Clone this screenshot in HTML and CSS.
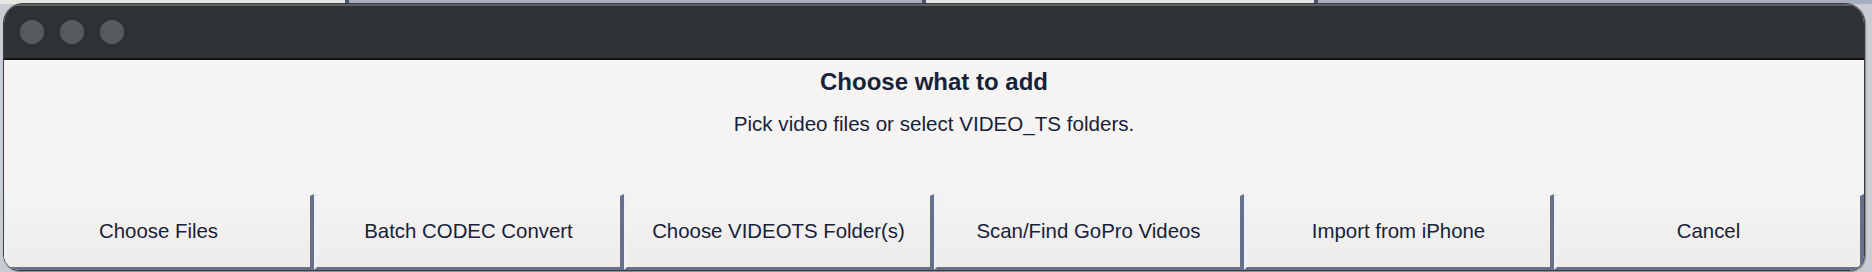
FILE: index.html
```html
<!DOCTYPE html>
<html>
<head>
<meta charset="utf-8">
<link rel="stylesheet" href="styles.css">
</head>
<body>
<div class="window">
  <div class="titlebar">
    <span class="light"></span>
    <span class="light"></span>
    <span class="light"></span>
  </div>
  <div class="content">
    <div class="heading">Choose what to add</div>
    <div class="sub">Pick video files or select VIDEO_TS folders.</div>
  </div>
  <div class="buttons">
    <div class="btn">Choose Files</div>
    <div class="btn">Batch CODEC Convert</div>
    <div class="btn">Choose VIDEOTS Folder(s)</div>
    <div class="btn">Scan/Find GoPro Videos</div>
    <div class="btn">Import from iPhone</div>
    <div class="btn">Cancel</div>
  </div>
</div>
</body>
</html>
```
FILE: styles.css
```css
html, body {
  margin: 0;
  padding: 0;
}
body {
  width: 1872px;
  height: 272px;
  overflow: hidden;
  box-sizing: border-box;
  padding: 3px 0 0 3px;
  background:
    linear-gradient(to right,
      #e6e6e4 0, #e6e6e4 345px, #4b5568 345px, #4b5568 349px,
      #a7afbf 349px, #a7afbf 922px, #4b5568 922px, #4b5568 926px,
      #e6e6e4 926px, #e6e6e4 1314px, #4b5568 1314px, #4b5568 1318px,
      #a7afbf 1318px, #a7afbf 100%) top / 100% 4px no-repeat,
    #c9ccd3;
  font-family: "Liberation Sans", Arial, sans-serif;
}
.window {
  width: 1862px;
  height: 268px;
  box-sizing: border-box;
  border: 1px solid #3b3d40;
  border-radius: 20px 20px 16px 16px;
  overflow: hidden;
  background: #f5f4f2;
  display: flex;
  flex-direction: column;
  box-shadow: 1px 1px 1px rgba(0, 0, 0, 0.35);
}
.titlebar {
  height: 56px;
  flex: none;
  box-sizing: border-box;
  background: #2f3235;
  border-top: 2px solid #5f6265;
  border-bottom: 2px solid #111214;
  display: flex;
  align-items: center;
  gap: 16px;
  padding-left: 16px;
}
.light {
  width: 24px;
  height: 24px;
  border-radius: 50%;
  background: #575c5f;
}
.content {
  flex: 1;
  display: flex;
  flex-direction: column;
  align-items: center;
  color: #17223a;
}
.heading {
  font-weight: bold;
  font-size: 24px;
  margin-top: 8px;
  line-height: 28px;
}
.sub {
  font-size: 20.6px;
  margin-top: 16px;
  line-height: 24px;
}
.buttons {
  flex: none;
  height: 76px;
  display: flex;
}
.btn {
  flex: 1;
  box-sizing: border-box;
  border-top: 2px solid #eef1f8;
  border-left: 3px solid #eef1f8;
  border-right: 4px solid #66708a;
  border-bottom: 3px solid #66708a;
  background: linear-gradient(#f5f4f2, #edecea);
  display: flex;
  align-items: center;
  justify-content: center;
  font-size: 20.4px;
  color: #17223a;
  padding-bottom: 1px;
}
```
